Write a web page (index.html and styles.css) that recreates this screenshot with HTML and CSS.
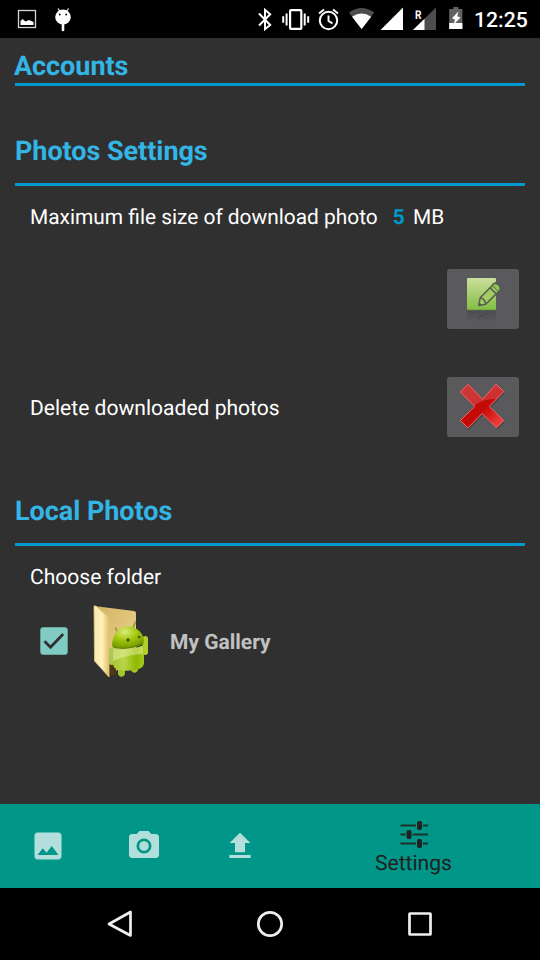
FILE: index.html
```html
<!DOCTYPE html>
<html lang="en">
<head>
<meta charset="utf-8">
<title>Settings</title>
<link rel="stylesheet" href="styles.css">
</head>
<body>
<div class="screen">
  <header class="status">
    <div class="status-group">
      <svg width="26" height="38" viewBox="14 0 26 38"><rect x="18.500" y="10.500" width="17" height="17" fill="none" stroke="#d5d5d5" stroke-width="1.300"/><path d="M20.500 25v-4l2-2 3 2.500 3.500-1.500 4.500 2v3z" fill="#fff"/></svg>
      <svg width="26" height="38" viewBox="50 0 26 38"><path d="M58 8.500l2 3M68.500 8.500l-2 3" stroke="#fff" stroke-width="1.200"/><ellipse cx="63" cy="17" rx="7.800" ry="7.500" fill="#fff"/><path d="M63 24v6" stroke="#fff" stroke-width="2.600" stroke-linecap="round"/><circle cx="59.800" cy="14.500" r=".9"/><circle cx="66.200" cy="14.500" r=".9"/></svg>
    </div>
    <div class="status-group status-right">
      <svg width="23" height="38" viewBox="255 0 23 38"><path d="M259 13.500l11.200 11.500-5.200 4.200V9.800l5.200 4.400L259 25.500" fill="none" stroke="#fff" stroke-width="2"/></svg>
      <svg width="36" height="38" viewBox="278 0 36 38"><rect x="290.100" y="10.100" width="11.200" height="18.800" rx=".8" fill="none" stroke="#fff" stroke-width="2.200"/><path d="M286.600 13.500v12M304.700 13.500v12M283.200 16.200v6.600M308.200 16.200v6.600" stroke="#fff" stroke-width="2"/></svg>
      <svg width="30" height="38" viewBox="314 0 30 38"><circle cx="328.500" cy="20.500" r="8.700" fill="none" stroke="#fff" stroke-width="2"/><path d="M328.500 15.500v5.500l4 2.400M319 13.500l5-4M338 13.500l-5-4" fill="none" stroke="#fff" stroke-width="1.900"/></svg>
      <svg width="33" height="38" viewBox="344 0 33 38"><path d="M349 12.500Q361.500 3.500 374.300 12.500L361.600 29z" fill="#4d4d4d"/><path d="M352 16.700Q361.600 10.500 371.200 16.700L361.600 29z" fill="#fff"/></svg>
      <svg width="31" height="38" viewBox="377 0 31 38"><path d="M380.500 30L403 7.500V30z" fill="#fff"/></svg>
      <svg width="34" height="38" viewBox="408 0 34 38"><path d="M413 30L436 7.500V30z" fill="#4d4d4d"/><path d="M413 30l11.500-11.200V30z" fill="#fff"/><rect x="414" y="8" width="8" height="12"/><text x="415" y="18.500" class="roaming" textLength="6.500" lengthAdjust="spacingAndGlyphs">R</text></svg>
      <svg width="30" height="38" viewBox="442 0 30 38"><path d="M449.200 9h4V7h5.200v2h4v20h-13.200z" fill="#626262"/><path d="M449.200 23h13.200v6h-13.200z" fill="#fff"/><path d="M458.400 11.500L452 18.200l3 1.300-1.500 5.300 7-7.300-3.200-1.200z" fill="#fff"/></svg>
      <span class="clock">12:25</span>
    </div>
  </header>

  <main class="content">
    <h2 class="heading heading-accounts">Accounts</h2>

    <section class="section">
      <h2 class="heading">Photos Settings</h2>
      <p class="row size-row">Maximum file size of download photo <b class="size">5</b> MB</p>
      <div class="action edit-action">
        <button class="button" type="button" aria-label="Edit">
          <svg width="72" height="60" viewBox="0 0 72 60">
            <defs>
              <linearGradient id="note" x2="0" y2="1"><stop stop-color="#cbdf9c"/><stop offset="1" stop-color="#82bd42"/></linearGradient>
              <linearGradient id="mirror" x2="0" y2="1"><stop stop-color="#4c4d4e"/><stop offset="1" stop-color="#5a5a5c"/></linearGradient>
            </defs>
            <rect x="20" y="42" width="29" height="11" fill="url(#mirror)"/>
            <path d="M32 50c0-4 4-5 7 0" fill="none" stroke="#444546" stroke-width="1"/>
            <rect x="20" y="9" width="29" height="32" rx="1" fill="url(#note)"/>
            <path d="M20 41.300h29" stroke="#4e6144" stroke-width="1"/>
            <path d="M45 15l5-3v12l-4-1z" fill="#5a5a5c"/>
            <path d="M31.800 36.400l1.400-7.600L45.500 16.200l6.300 6.200L38.700 35.200z" fill="#a3cc62" stroke="#555d50" stroke-width="1.500" stroke-linejoin="round"/>
            <path d="M33.200 28.800q4.500.5 5.500 6.400M43 18.700l6.300 6.200" fill="none" stroke="#555d50" stroke-width="1.500"/>
            <path d="M31.800 36.400l.6-3 2.500 2.400z" fill="#555d50"/>
            <path d="M45.900 16.500c1.500-2.200 4-1.500 5.600.5s1.200 4-.3 5.100z" fill="#8fca4d"/>
          </svg>
        </button>
      </div>
      <div class="action delete-action">
        <span class="action-label">Delete downloaded photos</span>
        <button class="button" type="button" aria-label="Delete">
          <svg width="72" height="60" viewBox="0 0 72 60">
            <defs>
              <linearGradient id="red" x2="1" y2="1"><stop stop-color="#c51414"/><stop offset=".55" stop-color="#c40808"/><stop offset="1" stop-color="#ff5552"/></linearGradient>
              <clipPath id="cross"><path d="M21 7L35.500 22 49 7l8 7.500L42.500 29.500 57 43.500 49.500 51 35 36.800 21 51.200 13 43.500 27.500 29.500 13 15z"/></clipPath>
            </defs>
            <path d="M22 8.500L36.500 23.500 50 8.500l8 7.500L43.500 31 58 45 50.500 52.500 36 38.300 22 52.700 14 45 28.500 31 14 16.500z" fill="#464648"/>
            <g clip-path="url(#cross)"><rect x="12" y="6" width="46" height="46" fill="url(#red)"/><path d="M12 6h46v16Q37 20 27 29L12 29z" fill="#fff" opacity=".16"/></g>
            <path d="M21 7.300L35.500 22.300 49 7.300l7.700 7.200L42.200 29.500 56.700 43.500 49.500 50.700 35 36.500 21 50.900 13.300 43.500 27.800 29.500 13.300 15z" fill="none" stroke="#ee6865" stroke-width="1" stroke-linejoin="round"/>
          </svg>
        </button>
      </div>
    </section>

    <section class="section local">
      <h2 class="heading">Local Photos</h2>
      <p class="row choose">Choose folder</p>
      <div class="folder">
        <svg class="check" width="28" height="28" viewBox="0 0 28 28"><rect x=".3" y=".3" width="27.400" height="27.400" rx="3" fill="#80cbc4"/><path d="M4.500 14.200l6 6L23.200 7" fill="none" stroke="#303030" stroke-width="2.700"/></svg>
        <svg class="folder-icon" width="60" height="78" viewBox="90 602 60 78">
          <defs>
            <linearGradient id="back" x2="1" y2="1"><stop stop-color="#d3b263"/><stop offset="1" stop-color="#f0d894"/></linearGradient>
            <linearGradient id="front" x2="1" y2="0"><stop stop-color="#f9e9ac"/><stop offset=".55" stop-color="#fff0b8"/><stop offset="1" stop-color="#dfbf68"/></linearGradient>
            <radialGradient id="head" cx=".4" cy=".25" r=".75"><stop stop-color="#dced79"/><stop offset=".5" stop-color="#a4c80f"/><stop offset="1" stop-color="#749b00"/></radialGradient>
            <linearGradient id="robot" x2="1" y2="0"><stop stop-color="#a8c634"/><stop offset=".35" stop-color="#b9d64a"/><stop offset=".75" stop-color="#8fb900"/><stop offset="1" stop-color="#a7c925"/></linearGradient>
          </defs>
          <path d="M94 606l40 5q2 .5 2 2v45l-28 18z" fill="url(#back)"/>
          <path d="M108 652l8 10v12l-8 3z" fill="#493915"/>
          <path d="M94 606q2-1 4 2l10 9q1 1 1 3v57L94.500 661z" fill="url(#front)" stroke="#dfc57c" stroke-width=".8"/>
          <rect x="109" y="648" width="5.500" height="17" rx="2.700" fill="#aec657"/>
          <rect x="142.500" y="636" width="5.500" height="19" rx="2.700" fill="#b0d02f"/>
          <path d="M118 665v8c0 5 7 5 7 0v-8zM131 660v9c0 5 7 5 7 0v-9z" fill="#a3c52b"/>
          <path d="M113 648q13 4 31-3v17c0 4-2 6-5 7-8 2-13 2-20 1-4-1-6-3-6-6z" fill="url(#robot)"/>
          <path d="M113 649q15 2 30-3v8q-14 0-30 7z" fill="#eff4b6" opacity=".45"/>
          <path d="M133 628l2.500-6M117 631l-1.500-3" stroke="#829f21" stroke-width="1.500" stroke-linecap="round"/>
          <path d="M112 646c0-13 8-19.500 16-19.500 9 0 16 7 16 15.500-2 4-10 6-18 6-7 0-12 0-14-2z" fill="url(#head)"/>
          <path d="M113 647q15 4 30-4" fill="none" stroke="#617f05" stroke-width="1.200"/>
          <circle cx="128" cy="640" r="1.700" fill="#3f5508"/><circle cx="139" cy="637" r="1.300" fill="#3f5508"/>
        </svg>
        <span class="folder-name">My Gallery</span>
      </div>
    </section>
  </main>

  <nav class="tabs">
    <div class="tab"><svg width="36" height="36" viewBox="0 0 24 24"><path fill="#b2dfdb" d="M21 19V5c0-1.100-.9-2-2-2H5c-1.100 0-2 .9-2 2v14c0 1.100.9 2 2 2h14c1.100 0 2-.9 2-2zM8.500 13.500l2.500 3.010L14.500 12l4.500 6H5l3.500-4.500z"/></svg></div>
    <div class="tab"><svg width="36" height="36" viewBox="0 0 24 24"><path fill="#b2dfdb" fill-rule="evenodd" d="M9 2L7.170 4H4c-1.100 0-2 .9-2 2v12c0 1.100.9 2 2 2h16c1.100 0 2-.9 2-2V6c0-1.100-.9-2-2-2h-3.170L15 2H9zm3 15a5 5 0 1 1 0-10 5 5 0 0 1 0 10z"/><circle cx="12" cy="12" r="3.200" fill="#b2dfdb"/></svg></div>
    <div class="tab"><svg width="36" height="36" viewBox="0 0 36 36"><path fill="#b2dfdb" d="M18 4.700l10.500 10.300h-5.500v9.200H13V15H7.500zM7.300 27h21.400v3H7.300z"/></svg></div>
    <div class="tab tab-active">
      <svg width="30" height="30" viewBox="0 0 30 30"><path d="M1.500 6.500h15.500M24 6.500h5M1.500 15.500h5M13.500 15.500H29M1.500 24.500h15.500M24 24.500h5" stroke="#1d302e" stroke-width="2"/><g fill="#212121"><rect x="18" y="2" width="5" height="9" rx="2"/><rect x="7.500" y="11" width="5" height="9" rx="2"/><rect x="18" y="20" width="5" height="9" rx="2"/></g></svg>
      <span>Settings</span>
    </div>
  </nav>

  <footer class="system-nav">
    <svg width="30" height="30" viewBox="0 0 30 30"><path d="M25.500 3v23.500L4 15z"/></svg>
    <svg width="30" height="30" viewBox="0 0 30 30"><circle cx="15" cy="15" r="11.700"/></svg>
    <svg width="30" height="30" viewBox="0 0 30 30"><rect x="4.500" y="4.500" width="21" height="21" rx=".5"/></svg>
  </footer>
</div>
</body>
</html>
```

FILE: styles.css
```css
* {
  box-sizing: border-box;
}

body,
h2,
p {
  margin: 0;
}

body {
  background: #000;
}

svg {
  display: block;
  flex: none;
}

.screen {
  display: flex;
  flex-direction: column;
  width: 540px;
  height: 960px;
  background: #303030;
  color: #fff;
  font: 21.07px/25px Roboto, sans-serif;
  text-rendering: geometricPrecision;
}

.status {
  display: flex;
  justify-content: space-between;
  height: 38px;
  padding: 0 12px 0 14px;
  background: #000;
}

.status-group {
  display: flex;
  gap: 10px;
}

.status-right {
  align-items: center;
  gap: 0;
}

.clock {
  width: 56px;
  padding: 2px 0 0 2px;
  font-size: 21.2px;
  font-weight: 500;
  white-space: nowrap;
}

.roaming {
  fill: #fff;
  font: 700 12px Roboto, sans-serif;
}

.content {
  flex: 1;
  padding: 12px 15px 0;
}

.heading {
  height: 51px;
  border-bottom: 3px solid #0099cc;
  color: #33b5e5;
  font-size: 27px;
  line-height: 32px;
  font-weight: 700;
  letter-spacing: -0.05px;
}

.heading-accounts {
  height: 36px;
  text-indent: -1px;
}

.section {
  margin-top: 49px;
}

.row {
  padding-left: 15px;
}

.size-row {
  margin-top: 20px;
  font-size: 20.88px;
}

.size {
  margin: 0 3px 0 10px;
  color: #0099cc;
}

.action {
  display: flex;
  align-items: center;
  justify-content: space-between;
  height: 60px;
  padding: 0 6px 0 15px;
}

.action-label {
  padding-top: 2px;
}

.edit-action {
  justify-content: flex-end;
  margin-top: 38px;
}

.delete-action {
  margin-top: 48px;
}

.button {
  width: 72px;
  height: 60px;
  padding: 0;
  border: 0;
  border-radius: 3px;
  background: #5a5a5c;
}

.local {
  margin-top: 58px;
}

.choose {
  margin-top: 19px;
}

.folder {
  display: flex;
  align-items: center;
  height: 78px;
  margin-top: 12px;
  padding-left: 25px;
}

.folder-icon {
  margin-left: 22px;
}

.folder-name {
  margin-left: 20px;
  padding-top: 4px;
  color: #c1c1c1;
  font-size: 21px;
  font-weight: 700;
}

.tabs {
  display: grid;
  grid-template-columns: 96px 96px 96px 252px;
  height: 84px;
  background: #009688;
}

.tab {
  display: flex;
  align-items: center;
  justify-content: center;
}

.tab-active {
  flex-direction: column;
  gap: 2px;
  padding: 2px 1px 0 0;
  color: #212121;
}

.system-nav {
  display: flex;
  align-items: center;
  justify-content: space-between;
  height: 72px;
  padding: 0 105px;
  background: #000;
}

.system-nav svg {
  fill: none;
  stroke: #eee;
  stroke-width: 2.7;
  stroke-linejoin: round;
}
```
